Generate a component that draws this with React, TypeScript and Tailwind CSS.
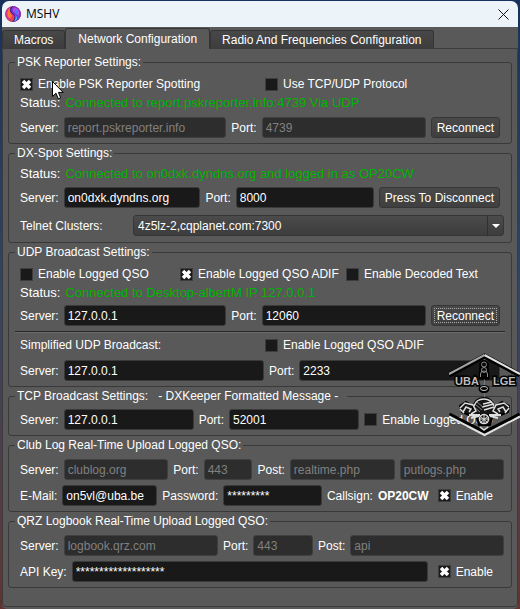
import { useId, useState } from 'react';
import type { ReactNode } from 'react';
import clsx from 'clsx';

type Tab = 'macros' | 'network' | 'radio';

const tabs: { id: Tab; label: string }[] = [
  { id: 'macros', label: 'Macros' },
  { id: 'network', label: 'Network Configuration' },
  { id: 'radio', label: 'Radio And Frequencies Configuration' },
];

const Group = ({ title, children }: { title: string; children: ReactNode }) => (
  <fieldset className="min-w-0 rounded-[3px] border border-[#393939] px-[6px]">
    <legend className="h-[18px] whitespace-pre px-[2px] leading-[18px]">{title}</legend>
    {children}
  </fieldset>
);

const Field = ({
  label,
  value,
  className,
  disabled = false,
}: {
  label: string;
  value: string;
  className: string;
  disabled?: boolean;
}) => {
  const id = useId();
  return (
    <div className={clsx('flex min-w-0 items-center gap-[5px]', className)}>
      <label htmlFor={id} className="shrink-0 whitespace-nowrap">
        {label}
      </label>
      <TextBox id={id} value={value} disabled={disabled} />
    </div>
  );
};

const TextBox = ({
  id,
  value,
  disabled = false,
  title,
}: {
  id?: string;
  value: string;
  disabled?: boolean;
  title?: string;
}) => (
  <input
    id={id}
    type="text"
    aria-label={title}
    defaultValue={value}
    disabled={disabled}
    className="h-[21px] w-full min-w-0 flex-1 rounded-[3px] border border-[#3a3a3a] bg-[#191919] px-[3px] text-white outline-none disabled:border-[#404040] disabled:bg-[#2d2d2d] disabled:text-[#808080]"
  />
);

const CheckBox = ({ label, checked = false }: { label: string; checked?: boolean }) => {
  const [on, setOn] = useState(checked);
  return (
    <label className="flex h-[18px] items-center gap-[5px] whitespace-nowrap">
      <span className="grid size-[13px] shrink-0">
        <input
          type="checkbox"
          checked={on}
          onChange={(e) => setOn(e.target.checked)}
          className="col-start-1 row-start-1 size-[13px] appearance-none border border-[#3d3d3d] bg-[#191919]"
        />
        {on && (
          <svg viewBox="0 0 13 13" className="pointer-events-none col-start-1 row-start-1 size-[13px]">
            <path d="M3 3 10 10M10 3 3 10" stroke="#fff" strokeWidth="3.500" fill="none" />
          </svg>
        )}
      </span>
      {label}
    </label>
  );
};

const PushButton = ({ children, focused = false }: { children: ReactNode; focused?: boolean }) => (
  <button
    type="button"
    className="flex h-[21px] shrink-0 rounded-[3px] border border-[#363636] bg-linear-to-b from-[#494949] to-[#3f3f3f] p-[2px]"
  >
    <span
      className={clsx(
        'flex h-full items-center border border-dotted px-[2px] whitespace-nowrap',
        focused ? 'border-[#a8a8a8]' : 'border-transparent',
      )}
    >
      {children}
    </span>
  </button>
);

const Status = ({ children }: { children: ReactNode }) => (
  <p className="flex h-[18px] items-center gap-[5px] pl-[5px] text-[13px] whitespace-nowrap">
    <span>Status:</span>
    <output className="text-[#00b400]">{children}</output>
  </p>
);

const AppIcon = () => (
  <svg viewBox="0 0 16 16" className="size-4">
    <defs>
      <clipPath id="ball">
        <circle cx="8" cy="8" r="7.800" />
      </clipPath>
    </defs>
    <g clipPath="url(#ball)">
      <rect width="16" height="16" fill="#e8358f" />
      <path d="M8 0C4 3 5 6 8 8S11 13 7 16H16V0Z" fill="#7a38d8" />
      <path d="M5.500 2C2 3.500 1.500 9 4 12 7 12 7.500 10 6 8 4.500 6 4.500 4 5.500 2Z" fill="#ff7b2e" />
      <path d="M10 1.500C14 3 15.500 7 13 10 12 7 8 7 8 4 8 2.500 9 2 10 1.500Z" fill="#b44df0" />
      <path d="M10 3.500C13 4.500 13.500 7 12 9 11 7 9 6.500 10 3.500Z" fill="#3b7cf5" />
      <path d="M9.500 9C12 10 13 12 11 15L8 16C10 13 10.500 11 9.500 9Z" fill="#35b5f5" />
      <path d="M2 12C5 14.500 7 13 8 11 9 13 8 15 6 16H3Z" fill="#f0404c" />
      <path d="M8 0C4.500 3 5 6 8 8S10.500 13 7.500 16" stroke="#231a5c" strokeWidth="1" fill="none" />
    </g>
    <circle cx="8" cy="8" r="7.500" fill="none" stroke="#6a2c80" strokeWidth=".5" />
  </svg>
);

const ClubEmblem = () => (
  <svg
    viewBox="0 0 71 84"
    className="pointer-events-none absolute top-[353px] right-0 h-[84px] w-[71px]"
    fill="none"
  >
    <g stroke="#000" strokeWidth="5">
      <path d="M0 22 35.500 3 71 22" />
      <path d="M0 62 35.500 80 71 62" />
    </g>
    <path d="M0 21 35.500 2" stroke="#a4a4a4" strokeWidth="2" />
    <path d="M35.500 2 71 21M0 63.500 35.500 82 71 63.500" stroke="#e2e2e2" strokeWidth="2" />
    <path d="M35.500 26V46" stroke="#777" />
    <g stroke="#000" strokeWidth="4">
      <circle cx="35" cy="12" r="3" />
      <circle cx="35" cy="17" r="3" />
      <path d="M31.500 24.500v-3q0-3 3.500-3t3.500 3v3Z" />
      <ellipse cx="35" cy="36" rx="3.500" ry="2" />
    </g>
    <g stroke="#8e8e8e" strokeWidth="1">
      <circle cx="35" cy="11.500" r="2.500" />
      <circle cx="35" cy="17" r="2.500" />
      <path d="M31.500 24v-3q0-3 3.500-3t3.500 3v3" />
      <ellipse cx="35" cy="35.500" rx="3.500" ry="2" stroke="#ccc" />
    </g>
    <g
      fontFamily="Liberation Sans, Arial, sans-serif"
      fontSize="11"
      fontWeight="700"
      fill="#bdbdbd"
      stroke="#000"
      strokeWidth="3"
      paintOrder="stroke"
    >
      <text x="6" y="32">UBA</text>
      <text x="44" y="32">LGE</text>
    </g>
    <path
      d="M24 55q2-10 11-10 8 0 10 9l8-5 7 4-1 6-7 3H20l-7-3-2-6 6-4 8 5ZM27 62h17l-3 10h-11Z"
      fill="#151515"
      stroke="#000"
      strokeWidth="2"
    />
    <g stroke="#dedede" strokeWidth="1.500">
      <path d="M25 53q2-7 10-7 7 0 10 7" />
      <path d="M34 51l9-2M33 54l12-3M35 57l10-3" />
      <path d="M26 51l7 6M28 49l7 6M25 54l6 5" stroke="#888" strokeWidth="1" />
      <path d="M11 55l5-5 8 2 3 6-5 3M14 59l3-5 5 2-2 3M11 56l4 4" />
      <path d="M60 54l-5-4-8 2-3 6 5 3M57 59l-3-5-5 2 2 3M60 55l-4 5" />
      <path d="M20 62h11M40 62h12M22 65l8-2M41 63l8 2" strokeWidth="2" />
      <circle cx="35" cy="66" r="4.500" />
      <path d="M35 61v10M30 66h10M31 63l8 7M39 63l-8 7" strokeWidth="1" />
      <path d="M31 74l4 3 4-3" />
    </g>
  </svg>
);

const MousePointer = () => (
  <svg viewBox="0 0 12 19" className="pointer-events-none absolute top-[81px] left-[52px] h-[19px] w-3">
    <path d="M.5.5V15.500L4 12.200 6.300 17.800 8.700 16.800 6.400 11.400H11.200Z" fill="#fff" stroke="#000" />
  </svg>
);

export default function App() {
  const [active, setActive] = useState<Tab>('network');
  const clusterId = useId();

  return (
    <div className="relative flex min-h-screen flex-col bg-linear-to-b from-[#17305c] via-[#344564] to-[#63332f] px-[2px] pt-px font-['Liberation_Sans',Arial,sans-serif] text-[12px] leading-[18px] text-white">
      <header className="flex h-[26px] items-center rounded-t-[7px] bg-[#ecf4fa] pr-2 pl-[3px] text-black">
        <AppIcon />
        <h1 className="ml-[5px] flex-1 font-['Open_Sans','Noto_Sans',sans-serif]">MSHV</h1>
        <button type="button" aria-label="Close" className="p-px">
          <svg viewBox="0 0 11 11" className="size-[11px]">
            <path d="M.5.5 10.500 10.500M10.500.5.5 10.500" stroke="#111" fill="none" />
          </svg>
        </button>
      </header>

      <main className="flex flex-1 flex-col rounded-b-[5px] bg-[#595959] pt-px pb-[2px]">
        <nav role="tablist" className="flex h-5 items-end">
          {tabs.map((tab) => (
            <button
              key={tab.id}
              type="button"
              role="tab"
              aria-selected={active === tab.id}
              onClick={() => setActive(tab.id)}
              className={clsx(
                'rounded-t-[3px] border border-b-0 border-[#353535] whitespace-nowrap',
                active === tab.id
                  ? 'relative -mb-px h-[21px] bg-[#595959] px-3'
                  : 'h-[18px] bg-linear-to-b from-[#484848] to-[#3d3d3d] px-[11px]',
              )}
            >
              {tab.label}
            </button>
          ))}
        </nav>

        <section className="flex-1 rounded-b-[4px] border border-[#3c3c3c] px-[5px] pt-1">
          <Group title="PSK Reporter Settings:">
            <div className="grid grid-cols-2 gap-[6px] pt-1 pr-px pl-[5px]">
              <CheckBox label="Enable PSK Reporter Spotting" checked />
              <CheckBox label="Use TCP/UDP Protocol" />
            </div>
            <div className="mt-px">
              <Status>Connected to report.pskreporter.info:4739 Via UDP</Status>
            </div>
            <div className="mt-[5px] flex gap-[5px] px-[5px] pb-[5px]">
              <Field label="Server:" value="report.pskreporter.info" className="flex-[206]" disabled />
              <Field label="Port:" value="4739" className="flex-[194]" disabled />
              <PushButton>Reconnect</PushButton>
            </div>
          </Group>

          <Group title="DX-Spot Settings:">
            <div className="pt-[3px]">
              <Status>Connected to on0dxk.dyndns.org and logged in as OP20CW</Status>
            </div>
            <div className="mt-1 flex gap-[5px] px-[5px]">
              <Field label="Server:" value="on0dxk.dyndns.org" className="flex-[180]" />
              <Field label="Port:" value="8000" className="flex-[168]" />
              <PushButton>Press To Disconnect</PushButton>
            </div>
            <div className="mt-[7px] flex items-center pr-px pb-[6px] pl-[5px]">
              <label htmlFor={clusterId} className="w-[113px] shrink-0">
                Telnet Clusters:
              </label>
              <div className="grid flex-1">
                <select
                  id={clusterId}
                  className="col-start-1 row-start-1 h-[21px] w-full appearance-none rounded-[3px] border border-[#363636] bg-linear-to-b from-[#4b4b4b] to-[#3d3d3d] px-1 text-white outline-none"
                >
                  <option>4z5lz-2,cqplanet.com:7300</option>
                </select>
                <span className="pointer-events-none col-start-1 row-start-1 flex h-[21px] w-[17px] items-center justify-center justify-self-end border-l border-[#303030]">
                  <svg viewBox="0 0 8 4" className="h-1 w-2">
                    <path d="M0 0H8L4 4Z" fill="#fff" />
                  </svg>
                </span>
              </div>
            </div>
          </Group>

          <Group title="UDP Broadcast Settings:">
            <div className="grid grid-cols-[160fr_166fr_158fr] pt-1 pr-px pl-[5px]">
              <CheckBox label="Enable Logged QSO" />
              <CheckBox label="Enable Logged QSO ADIF" checked />
              <CheckBox label="Enable Decoded Text" />
            </div>
            <div className="mt-px">
              <Status>Connected to Desktop-albertM IP 127.0.0.1</Status>
            </div>
            <div className="mt-[3px] flex gap-[5px] px-[5px]">
              <Field label="Server:" value="127.0.0.1" className="flex-[206]" />
              <Field label="Port:" value="12060" className="flex-[194]" />
              <PushButton focused>Reconnect</PushButton>
            </div>
            <hr className="mt-[5px] h-[2px] border-t border-b border-t-[#262626] border-b-[#6a6a6a]" />
            <div className="mt-[3px] grid grid-cols-2 gap-[6px] pr-px pl-[5px]">
              <span>Simplified UDP Broadcast:</span>
              <CheckBox label="Enable Logged QSO ADIF" />
            </div>
            <div className="mt-[6px] flex gap-[5px] px-[5px] pb-[5px]">
              <Field label="Server:" value="127.0.0.1" className="flex-[244]" />
              <Field label="Port:" value="2233" className="flex-[231]" />
            </div>
          </Group>

          <Group title="TCP Broadcast Settings:   - DXKeeper Formatted Message -  ">
            <div className="flex items-center gap-[5px] pt-1 pr-3 pb-[5px] pl-[5px]">
              <Field label="Server:" value="127.0.0.1" className="flex-[173]" />
              <Field label="Port:" value="52001" className="flex-[160]" />
              <CheckBox label="Enable Logged QSO" />
            </div>
          </Group>

          <Group title="Club Log Real-Time Upload Logged QSO:">
            <div className="flex gap-[5px] pt-[5px] pr-px pl-[5px]">
              <Field label="Server:" value="clublog.org" className="flex-[148]" disabled />
              <Field label="Port:" value="443" className="flex-[79]" disabled />
              <Field label="Post:" value="realtime.php" className="flex-[137]" disabled />
              <div className="flex min-w-0 flex-[104]">
                <TextBox title="Second post address" value="putlogs.php" disabled />
              </div>
            </div>
            <div className="mt-[5px] flex items-center gap-[5px] pr-3 pb-[5px] pl-[5px]">
              <Field label="E-Mail:" value="on5vl@uba.be" className="flex-[135]" />
              <Field label="Password:" value="*********" className="flex-[157]" />
              <span>Callsign:</span>
              <strong className="mr-1">OP20CW</strong>
              <CheckBox label="Enable" checked />
            </div>
          </Group>

          <Group title="QRZ Logbook Real-Time Upload Logged QSO:">
            <div className="flex gap-[5px] pt-[5px] pr-px pl-[5px]">
              <Field label="Server:" value="logbook.qrz.com" className="flex-[198]" disabled />
              <Field label="Port:" value="443" className="flex-[90]" disabled />
              <Field label="Post:" value="api" className="flex-[186]" disabled />
            </div>
            <div className="mt-[5px] flex items-center gap-[10px] pr-3 pb-[5px] pl-[5px]">
              <Field label="API Key:" value="*******************" className="flex-1" />
              <CheckBox label="Enable" checked />
            </div>
          </Group>
        </section>
      </main>

      <ClubEmblem />
      <MousePointer />
    </div>
  );
}
